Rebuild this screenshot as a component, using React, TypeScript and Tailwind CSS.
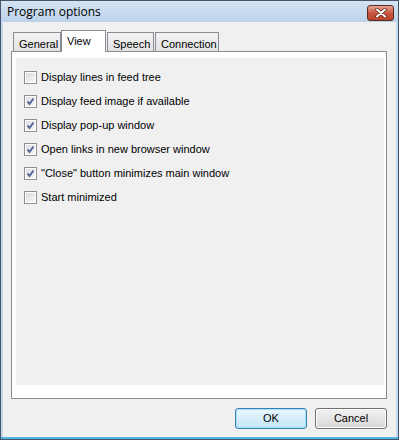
import React from "react";

const tabs = [
  { label: "General", w: "w-[48px]" },
  { label: "View", w: "w-[45px]" },
  { label: "Speech", w: "w-[47px]" },
  { label: "Connection", w: "w-[64px]" },
];

const options = [
  { label: "Display lines in feed tree", checked: false },
  { label: "Display feed image if available", checked: true },
  { label: "Display pop-up window", checked: true },
  { label: "Open links in new browser window", checked: true },
  { label: "\"Close\" button minimizes main window", checked: true },
  { label: "Start minimized", checked: false },
];

function CheckBox({ checked }: { checked: boolean }) {
  return (
    <div className="w-[13px] h-[13px] border border-[#8f8f8f] bg-white p-[1px] shrink-0">
      <div className="w-full h-full bg-gradient-to-br from-[#dcdcdc] to-[#f8f8f8] flex items-center justify-center">
        {checked && (
          <svg width="9" height="9" viewBox="0 0 9 9">
            <path d="M1.5 4.5 L3.5 7 L7.5 1.5" fill="none" stroke="#4a5f97" strokeWidth="1.8" />
          </svg>
        )}
      </div>
    </div>
  );
}

export default function App() {
  return (
    <div
      className="w-[399px] h-[440px] flex flex-col bg-[#c4d8ee] border border-[#44546a] text-[11px] text-black overflow-hidden"
      style={{ fontFamily: "'Liberation Sans', Arial, sans-serif" }}
    >
      {/* title bar */}
      <div className="h-[21px] flex items-center justify-between pl-[6px] pr-[4px] bg-gradient-to-b from-[#d5e3f3] to-[#bcd2ea]">
        <span className="text-[12px] text-black" style={{ fontFamily: "'Open Sans', 'Liberation Sans', sans-serif" }}>
          Program options
        </span>
        <div className="w-[27px] h-[16px] mt-[3px] rounded-[3px] border border-[#5d2a21] bg-gradient-to-b from-[#e3a597] via-[#c9573f] to-[#b9432b] flex items-center justify-center">
          <svg width="12" height="10" viewBox="0 0 12 10">
            <path d="M2 1.5 L10 8.5 M10 1.5 L2 8.5" stroke="#5a2418" strokeWidth="3.4" strokeLinecap="round" />
            <path d="M2 1.5 L10 8.5 M10 1.5 L2 8.5" stroke="#ffffff" strokeWidth="2" strokeLinecap="round" />
          </svg>
        </div>
      </div>

      {/* client area */}
      <div className="flex-1 mx-[2px] bg-[#f0f0f0] flex flex-col pl-[8px] pr-[8px] pt-[8px]">
        {/* tabs */}
        <div className="flex items-end h-[21px] pl-[2px] relative z-10">
          {tabs.map((t) =>
            t.label === "View" ? (
              <div
                key={t.label}
                className={`${t.w} h-[22px] bg-white border border-b-0 border-[#898c95] mb-[-1px] pl-[5px] pt-[2px]`}
              >
                {t.label}
              </div>
            ) : (
              <div
                key={t.label}
                className={`${t.w} h-[19px] bg-gradient-to-b from-[#f3f3f3] to-[#e2e2e2] border border-b-0 border-[#898c95] pl-[5px] pt-[3px] ml-[1px] first:ml-0`}
              >
                {t.label}
              </div>
            )
          )}
        </div>

        {/* tab panel */}
        <div className="h-[348px] w-[376px] bg-white border border-[#898c95] pt-[6px] pl-[4px] pr-[2px] pb-[13px]">
          <div className="h-full bg-[#f0f0f0] pt-[13px] pl-[8px] flex flex-col gap-[11px]">
            {options.map((o) => (
              <div key={o.label} className="flex items-center gap-[4px] h-[13px]">
                <CheckBox checked={o.checked} />
                <span className="leading-none">{o.label}</span>
              </div>
            ))}
          </div>
        </div>

        {/* buttons */}
        <div className="flex justify-end gap-[8px] mt-[9px] pr-[1px]">
          <button className="w-[72px] h-[21px] rounded-[3px] border border-[#3c7fb1] bg-gradient-to-b from-[#eaf6fd] to-[#c4e5f6] shadow-[inset_0_0_0_1px_#a4e0f7]">
            OK
          </button>
          <button className="w-[72px] h-[21px] rounded-[3px] border border-[#707070] bg-gradient-to-b from-[#f2f2f2] to-[#d8d8d8] shadow-[inset_0_0_0_1px_#fcfcfc]">
            Cancel
          </button>
        </div>
      </div>

      {/* bottom frame */}
      <div className="h-[2px] bg-[#4fb6e0]" />
    </div>
  );
}
